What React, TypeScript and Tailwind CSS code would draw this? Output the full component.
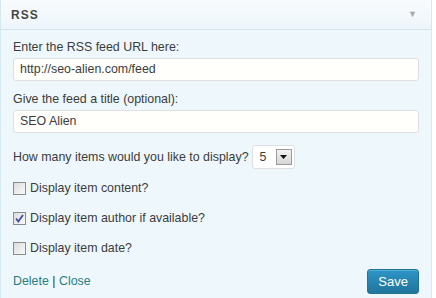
import React from "react";

const Check = ({ checked }: { checked?: boolean }) => (
    <span className="relative w-[13px] h-[13px] border border-[#8c8c8c] bg-gradient-to-br from-[#dcdcdc] to-[#fafafa] shrink-0">
        {checked && (
            <svg viewBox="0 0 13 13" className="absolute -left-px -top-px w-[13px] h-[13px]">
                <path d="M3 6.5 L5.3 9.5 L10 3" fill="none" stroke="#3a4fa0" strokeWidth="1.8" />
            </svg>
        )}
    </span>
);

const App: React.FC = () => {
    const options = [
        { label: "Display item content?", checked: false },
        { label: "Display item author if available?", checked: true },
        { label: "Display item date?", checked: false },
    ];
    return (
        <div className="w-[436px] h-[298px] bg-white pr-[4px] font-['Liberation_Sans',Arial,sans-serif] text-[12.4px] text-[#3c3c3c]">
            <div className="h-full border-x border-[#d6e8f2] bg-[#eef7fc] flex flex-col">
                <div className="h-[30px] shrink-0 flex items-center justify-between px-[10px] bg-gradient-to-b from-[#f8fbfd] to-[#eef6fb] border-b border-[#d1e5ef]">
                    <span className="font-bold text-[12px] tracking-[1px] text-[#464646]">RSS</span>
                    <span className="text-[9px] text-[#a8a8a8] mr-[4px]">▼</span>
                </div>
                <div className="px-[12px] pt-[10px] flex flex-col">
                    <label className="leading-[15px]">Enter the RSS feed URL here:</label>
                    <div className="mt-[3px] h-[23px] rounded-[3px] border border-[#dfdfdf] bg-[#fffffc] px-[6px] flex items-center">
                        http://seo-alien.com/feed
                    </div>
                    <label className="mt-[11px] leading-[15px]">Give the feed a title (optional):</label>
                    <div className="mt-[3px] h-[23px] rounded-[3px] border border-[#dfdfdf] bg-[#fffffc] px-[6px] flex items-center">
                        SEO Alien
                    </div>
                    <div className="mt-[12px] flex items-center gap-[3px]">
                        <span>How many items would you like to display?</span>
                        <div className="h-[24px] w-[43px] rounded-[3px] border border-[#dfdfdf] bg-white flex items-center justify-between pl-[7px] pr-[2px]">
                            <span>5</span>
                            <span className="w-[16px] h-[16px] border border-[#9a9a9a] bg-gradient-to-b from-[#f4f4f4] to-[#d6d6d6] flex items-center justify-center">
                                <svg viewBox="0 0 7 4" className="w-[7px] h-[4px]"><path d="M0 0 H7 L3.5 4 Z" fill="#111" /></svg>
                            </span>
                        </div>
                    </div>
                    <div className="mt-[13px] flex flex-col gap-[17px]">
                        {options.map((o) => (
                            <div key={o.label} className="flex items-center gap-[4px] leading-[13px]">
                                <Check checked={o.checked} />
                                <span>{o.label}</span>
                            </div>
                        ))}
                    </div>
                    <div className="mt-[14px] flex items-center justify-between">
                        <span className="text-[#2a7d84]">
                            Delete <span className="text-[#333]">|</span> Close
                        </span>
                        <button className="h-[25px] px-[10px] rounded-[3px] border border-[#21759b] bg-gradient-to-b from-[#2e95c7] to-[#21759b] text-white text-[13px] shadow-[inset_0_1px_0_rgba(120,200,230,0.5)]">
                            Save
                        </button>
                    </div>
                </div>
            </div>
        </div>
    );
};

export default App;
